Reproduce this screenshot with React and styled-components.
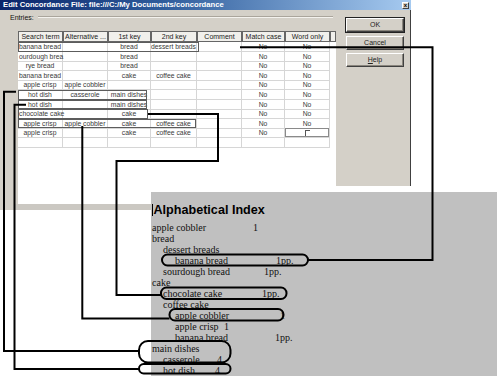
import styled, { createGlobalStyle } from "styled-components";

const GlobalStyle = createGlobalStyle`
  html, body {
    margin: 0;
    padding: 0;
    background: #fff;
  }
  body {
    font-family: "Liberation Sans", Arial, sans-serif;
  }
`;

const Canvas = styled.div`
  position: relative;
  width: 500px;
  height: 378px;
  background: #fff;
  overflow: hidden;
`;

/* ---------- dialog window ---------- */

const Dialog = styled.div`
  position: absolute;
  left: 0;
  top: 0;
  width: 411px;
  height: 210px;
  display: flex;
  flex-direction: column;
`;

const TitleBar = styled.div`
  height: 10px;
  flex: none;
  display: flex;
  align-items: center;
  justify-content: space-between;
  padding: 0 2px 0 3px;
  background: linear-gradient(90deg, #0a246a 0%, #2f5d9c 40%, #a6caf0 100%);
`;

const Title = styled.div`
  color: #fff;
  font-weight: bold;
  font-size: 7.7px;
  line-height: 10px;
  white-space: nowrap;
`;

const CloseBox = styled.div`
  width: 7px;
  height: 7px;
  background: #d4d0c8;
  border: 1px solid;
  border-color: #fff #404040 #404040 #fff;
  box-sizing: border-box;
  font-size: 6px;
  font-weight: bold;
  line-height: 5px;
  text-align: center;
  color: #000;
`;

const Body = styled.div`
  flex: 1;
  display: flex;
  align-items: flex-start;
`;

const EntriesPane = styled.div`
  width: 336px;
  height: 100%;
  display: flex;
  flex-direction: column;
  background: #d4d0c8;
  padding-top: 2px;
  box-sizing: border-box;
`;

const GroupLabel = styled.div`
  height: 10px;
  display: flex;
  align-items: center;
  gap: 4px;
  padding: 0 3px 0 10px;
  font-size: 7px;
  color: #111;
  &::after {
    content: "";
    flex: 1;
    border-top: 1px solid #aaa59c;
    border-bottom: 1px solid #f4f2ee;
  }
`;

const Table = styled.div`
  flex: 1;
  margin: 9px 0 0 18px;
  background: #fff;
  display: flex;
  flex-direction: column;
`;

const columns = "45px 45px 43px 46px 45px 43px 45px 6px";

const HeaderRow = styled.div`
  display: grid;
  grid-template-columns: ${columns};
  height: 11px;
`;

const HeadCell = styled.div`
  background: #f1f0ec;
  box-shadow: inset 0 0 0 1px #666;
  font-size: 7px;
  line-height: 11px;
  text-align: center;
  color: #222;
  white-space: nowrap;
  overflow: hidden;
`;

const Row = styled.div`
  position: relative;
  display: grid;
  grid-template-columns: ${columns};
  height: 9.6px;
  &::after {
    content: "";
    display: ${(p) => (p.$mark ? "block" : "none")};
    position: absolute;
    left: 0;
    top: 0;
    bottom: 0;
    width: ${(p) => p.$mark || 0}px;
    border: 1.5px solid #5c5c5c;
    box-sizing: border-box;
  }
`;

const Cell = styled.div`
  border-right: 1px solid #d6d6d6;
  border-bottom: 1px solid #d6d6d6;
  box-sizing: border-box;
  font-size: 6.8px;
  line-height: 9px;
  color: #3a3a3a;
  white-space: nowrap;
  padding-left: ${(p) => (p.$left ? "1px" : "0")};
  display: flex;
  align-items: center;
  justify-content: ${(p) => (p.$left ? "flex-start" : "center")};
  box-shadow: ${(p) => (p.$box ? "inset 0 0 0 1px #8a8a8a" : "none")};
  &:last-child {
    border: none;
  }
`;

const CheckMark = styled.span`
  width: 4px;
  height: 5px;
  border-top: 1px solid #555;
  border-left: 1px solid #555;
  margin-top: 1px;
`;

const BottomBand = styled.div`
  height: 6px;
  margin-left: 15px;
  background: #cbc8c2;
`;

const ButtonColumn = styled.div`
  width: 75px;
  height: 176px;
  background: #d4d0c8;
  border-right: 1px solid #404040;
  box-sizing: border-box;
  padding: 8px 6px 0 10px;
  display: flex;
  flex-direction: column;
  gap: 3.6px;
`;

const Button = styled.div`
  height: 14px;
  box-sizing: border-box;
  background: #d4d0c8;
  border: 1px solid;
  border-color: #fff #404040 #404040 #fff;
  box-shadow: inset -1px -1px #8a867e;
  outline: ${(p) => (p.$primary ? "1px solid #222" : "none")};
  font-size: 7px;
  line-height: 12px;
  text-align: center;
  color: #222;
  u {
    text-decoration: underline;
  }
`;

/* ---------- index panel ---------- */

const IndexPanel = styled.div`
  position: absolute;
  left: 151px;
  top: 192px;
  width: 346px;
  height: 184px;
  background: #c0c0c0;
  padding: 10px 0 0 1px;
  box-sizing: border-box;
`;

const IndexTitle = styled.div`
  display: flex;
  align-items: center;
  height: 16px;
  font-family: "Liberation Sans", Arial, sans-serif;
  font-weight: bold;
  font-size: 12.6px;
  color: #000;
`;

const Caret = styled.span`
  width: 1px;
  height: 12px;
  background: #000;
  margin-right: 0.5px;
`;

const EntryList = styled.div`
  margin-top: 4px;
  display: flex;
  flex-direction: column;
`;

const Entry = styled.div`
  display: flex;
  height: 11px;
  line-height: 11px;
  padding-left: ${(p) => [0, 11, 23][p.$level]}px;
  font-family: "Liberation Serif", "Times New Roman", serif;
  font-size: 10px;
  color: #111;
  white-space: nowrap;
`;

const Term = styled.span`
  width: ${(p) => p.$tab}px;
  flex: none;
`;

/* ---------- annotations ---------- */

const Overlay = styled.svg`
  position: absolute;
  left: 0;
  top: 0;
  pointer-events: none;
`;

const rows = [
  { cells: ["banana bread", "", "bread", "dessert breads", "", "No", "No"], left: [0], mark: 181 },
  { cells: ["ourdough brea", "", "bread", "", "", "No", "No"], left: [0] },
  { cells: ["rye bread", "", "bread", "", "", "No", "No"] },
  { cells: ["banana bread", "", "cake", "coffee cake", "", "No", "No"] },
  { cells: ["apple crisp", "apple cobbler", "", "", "", "No", "No"] },
  { cells: ["hot dish", "casserole", "main dishes", "", "", "No", "No"], mark: 129 },
  { cells: ["hot dish", "", "main dishes", "", "", "No", "No"], mark: 129 },
  { cells: ["chocolate cake", "", "cake", "", "", "No", "No"], left: [0], mark: 130 },
  { cells: ["apple crisp", "apple cobbler", "cake", "coffee cake", "", "No", "No"], mark: 178 },
  { cells: ["apple crisp", "", "cake", "coffee cake", "", "No", "box"] },
  { cells: ["", "", "", "", "", "", ""] },
];

const headers = ["Search term", "Alternative ...", "1st key", "2nd key", "Comment", "Match case", "Word only", ""];

const index = [
  { level: 0, term: "apple cobbler", tab: 101, page: "1" },
  { level: 0, term: "bread" },
  { level: 1, term: "dessert breads" },
  { level: 2, term: "banana bread", tab: 101, page: "1pp." },
  { level: 1, term: "sourdough bread", tab: 101, page: "1pp." },
  { level: 0, term: "cake" },
  { level: 1, term: "chocolate cake", tab: 99, page: "1pp." },
  { level: 1, term: "coffee cake" },
  { level: 2, term: "apple cobbler", tab: 105, page: "1" },
  { level: 2, term: "apple crisp", tab: 49, page: "1" },
  { level: 2, term: "banana bread", tab: 100, page: "1pp." },
  { level: 0, term: "main dishes" },
  { level: 1, term: "casserole", tab: 54, page: "4" },
  { level: 1, term: "hot dish", tab: 52, page: "4" },
];

function App() {
  return (
    <Canvas>
      <GlobalStyle />
      <Dialog>
        <TitleBar>
          <Title>Edit Concordance File: file:///C:/My Documents/concordance</Title>
          <CloseBox>x</CloseBox>
        </TitleBar>
        <Body>
          <EntriesPane>
            <GroupLabel>Entries:</GroupLabel>
            <Table>
              <HeaderRow>
                {headers.map((h, i) => (
                  <HeadCell key={i}>{h}</HeadCell>
                ))}
              </HeaderRow>
              {rows.map((r, i) => (
                <Row key={i} $mark={r.mark}>
                  {r.cells.map((c, j) =>
                    c === "box" ? (
                      <Cell key={j} $box>
                        <CheckMark />
                      </Cell>
                    ) : (
                      <Cell key={j} $left={r.left && r.left.includes(j)}>
                        {c}
                      </Cell>
                    )
                  )}
                  <Cell />
                </Row>
              ))}
            </Table>
            <BottomBand />
          </EntriesPane>
          <ButtonColumn>
            <Button $primary>OK</Button>
            <Button>Cancel</Button>
            <Button>
              <u>H</u>elp
            </Button>
          </ButtonColumn>
        </Body>
      </Dialog>

      <IndexPanel>
        <IndexTitle>
          <Caret />
          Alphabetical Index
        </IndexTitle>
        <EntryList>
          {index.map((e, i) => (
            <Entry key={i} $level={e.level}>
              <Term $tab={e.tab || 0}>{e.term}</Term>
              {e.page && <span>{e.page}</span>}
            </Entry>
          ))}
        </EntryList>
      </IndexPanel>

      <Overlay width="500" height="378" viewBox="0 0 500 378">
        <g fill="none" stroke="#000" strokeWidth="2">
          <path d="M240 47.3 H432.5 V260 H308" />
          <path d="M16 91.7 H4 V351 H139" />
          <path d="M26 104.7 H14.5 V369 H139" />
          <path d="M148 114 H218 V161 H116.5 V295 H161" />
          <path d="M82.3 126 V318.5 H169.5" />
          <rect x="162" y="254.5" width="146" height="11" rx="5.5" />
          <rect x="161" y="287.5" width="125.5" height="11.5" rx="5.5" />
          <rect x="169.5" y="309" width="114" height="11.5" rx="5.5" />
          <rect x="139" y="341" width="91.5" height="21.5" rx="9" />
          <rect x="139" y="364" width="91.5" height="9.5" rx="4.7" />
        </g>
      </Overlay>
    </Canvas>
  );
}

export default App;
